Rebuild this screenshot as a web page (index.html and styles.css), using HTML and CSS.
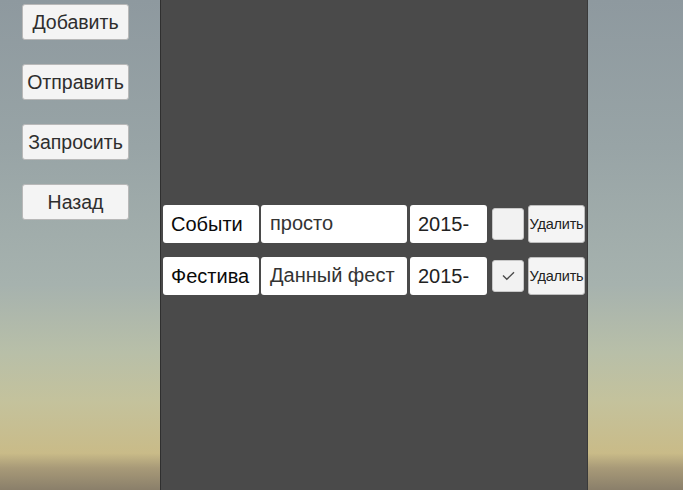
FILE: index.html
```html
<!DOCTYPE html>
<html lang="ru">
<head>
<meta charset="utf-8">
<link rel="stylesheet" href="styles.css">
</head>
<body>
<div class="screen">
  <div class="side">
    <button class="btn">Добавить</button>
    <button class="btn">Отправить</button>
    <button class="btn">Запросить</button>
    <button class="btn">Назад</button>
  </div>
  <div class="panel">
    <div class="row">
      <div class="cell name">Событи</div>
      <div class="cell desc">просто</div>
      <div class="cell date">2015-</div>
      <div class="check"></div>
      <button class="del">Удалить</button>
    </div>
    <div class="row">
      <div class="cell name">Фестива</div>
      <div class="cell desc">Данный фест</div>
      <div class="cell date">2015-</div>
      <div class="check"><svg width="13" height="10" viewBox="0 0 13 10"><path d="M1 4.5 L4.8 8.3 L12 1.2" fill="none" stroke="#4a4a4a" stroke-width="1.4"/></svg></div>
      <button class="del">Удалить</button>
    </div>
  </div>
  <div class="rest"></div>
</div>
</body>
</html>
```
FILE: styles.css
```css
html, body {
  margin: 0;
  padding: 0;
  width: 683px;
  height: 490px;
  overflow: hidden;
}
body {
  font-family: "Liberation Sans", Arial, sans-serif;
  background: linear-gradient(to bottom,
    #8e999f 0%,
    #98a4a6 30%,
    #a6b2ae 58%,
    #b8bfa8 72%,
    #c4c29c 82%,
    #c9bb88 92.5%,
    #a89a78 95.5%,
    #8a7f6a 100%);
}
.screen {
  display: flex;
  height: 490px;
}
.side {
  width: 160px;
  display: flex;
  flex-direction: column;
  align-items: flex-start;
  padding: 4px 0 0 22px;
  box-sizing: border-box;
  gap: 24px;
}
.btn {
  width: 107px;
  height: 36px;
  background: #f4f4f4;
  border: 1px solid #b8b8b8;
  border-radius: 3px;
  font-family: "Liberation Sans", Arial, sans-serif;
  font-size: 19.5px;
  color: #2e2e2e;
  padding: 0;
  margin: 0;
}
.panel {
  width: 428px;
  background: #4a4a4a;
  border-left: 1px solid #2f2f2f;
  border-right: 1px solid #3a3a3a;
  box-sizing: border-box;
  padding: 205px 0 0 2px;
  display: flex;
  flex-direction: column;
  gap: 14px;
}
.row {
  display: flex;
  align-items: center;
  height: 38px;
}
.cell {
  background: #fff;
  border-radius: 3px;
  height: 38px;
  box-sizing: border-box;
  font-size: 20px;
  color: #1a1a1a;
  display: flex;
  align-items: center;
  white-space: nowrap;
  overflow: hidden;
}
.name {
  width: 96px;
  padding-left: 8px;
  color: #0a0a0a;
}
.desc {
  width: 146px;
  margin-left: 2px;
  padding-left: 9px;
  align-items: flex-start;
  padding-top: 7px;
  color: #333;
}
.date {
  width: 77px;
  margin-left: 3px;
  padding-left: 8px;
  color: #222;
}
.check {
  width: 32px;
  height: 32px;
  margin-left: 5px;
  background: #f2f2f2;
  border: 1px solid #c8c8c8;
  border-radius: 3px;
  box-sizing: border-box;
  display: flex;
  align-items: center;
  justify-content: center;
}
.del {
  width: 57px;
  height: 38px;
  margin-left: 4px;
  background: #f4f4f4;
  border: 1px solid #bdbdbd;
  border-radius: 3px;
  font-family: "Liberation Sans", Arial, sans-serif;
  font-size: 14.5px;
  letter-spacing: -0.2px;
  color: #222;
  padding: 0;
  white-space: nowrap;
  overflow: hidden;
}
.rest {
  flex: 1;
}
```
